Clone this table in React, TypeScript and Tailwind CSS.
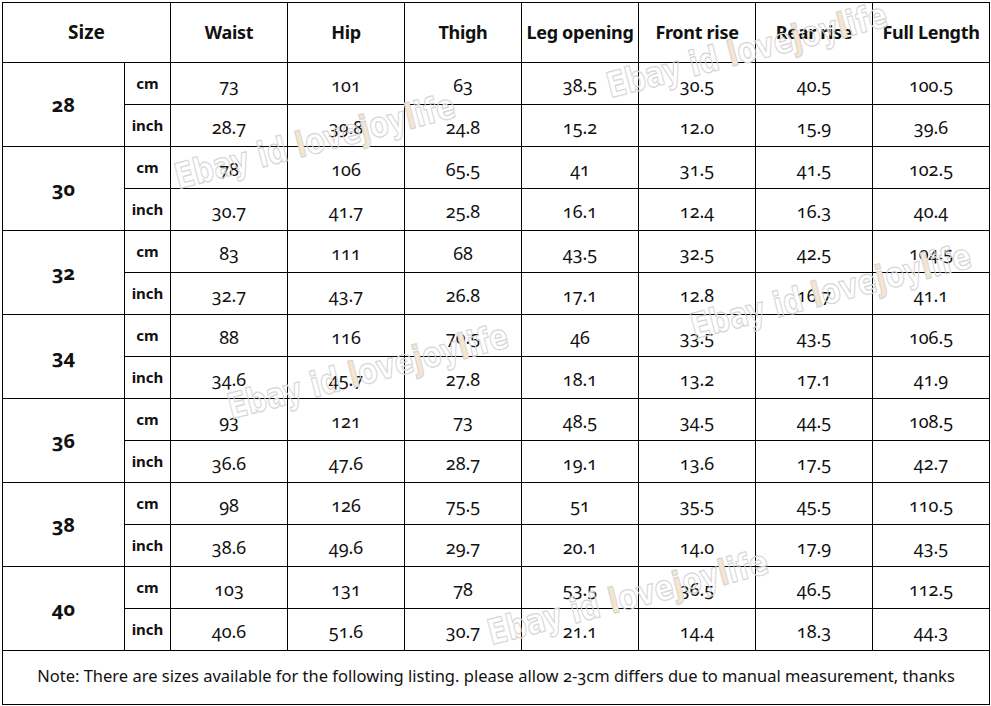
import React from 'react';

const headers = ['Waist', 'Hip', 'Thigh', 'Leg opening', 'Front rise', 'Rear rise', 'Full Length'];

const rows: { size: string; cm: string[]; inch: string[] }[] = [
  { size: '28', cm: ['73', '101', '63', '38.5', '30.5', '40.5', '100.5'], inch: ['28.7', '39.8', '24.8', '15.2', '12.0', '15.9', '39.6'] },
  { size: '30', cm: ['78', '106', '65.5', '41', '31.5', '41.5', '102.5'], inch: ['30.7', '41.7', '25.8', '16.1', '12.4', '16.3', '40.4'] },
  { size: '32', cm: ['83', '111', '68', '43.5', '32.5', '42.5', '104.5'], inch: ['32.7', '43.7', '26.8', '17.1', '12.8', '16.7', '41.1'] },
  { size: '34', cm: ['88', '116', '70.5', '46', '33.5', '43.5', '106.5'], inch: ['34.6', '45.7', '27.8', '18.1', '13.2', '17.1', '41.9'] },
  { size: '36', cm: ['93', '121', '73', '48.5', '34.5', '44.5', '108.5'], inch: ['36.6', '47.6', '28.7', '19.1', '13.6', '17.5', '42.7'] },
  { size: '38', cm: ['98', '126', '75.5', '51', '35.5', '45.5', '110.5'], inch: ['38.6', '49.6', '29.7', '20.1', '14.0', '17.9', '43.5'] },
  { size: '40', cm: ['103', '131', '78', '53.5', '36.5', '46.5', '112.5'], inch: ['40.6', '51.6', '30.7', '21.1', '14.4', '18.3', '44.3'] },
];

/** 水印文字 */
function Watermark({ className }: { className: string }) {
  const fill = 'text-[#f7e6cc]';
  return (
    <div
      className={`absolute -translate-x-1/2 -translate-y-1/2 rotate-[-14.5deg] scale-y-[1.25] whitespace-nowrap pointer-events-none font-['DejaVu_Sans',sans-serif] font-bold text-[28px] leading-none text-transparent [-webkit-text-stroke:1px_#d6d6d6] ${className}`}
    >
      Ebay id <span className={fill}>l</span>ove<span className={fill}>j</span>oy<span className={fill}>l</span>ife
    </div>
  );
}

export default function App() {
  return (
    <div className="relative w-[991px] h-[706px] bg-white pl-[2px] pt-[2px] font-['Noto_Sans','Open_Sans',sans-serif] text-[#111] oldstyle-nums">
      <div className="grid w-fit grid-cols-[121px_45px_repeat(7,116px)] grid-rows-[59px_repeat(14,41px)_53px] gap-px p-px bg-black">
        {/* 表头 */}
        <div className="col-span-2 bg-white flex items-center justify-center font-bold text-[19px]">Size</div>
        {headers.map((h) => (
          <div key={h} className="bg-white flex items-center justify-center font-bold text-[18px] tracking-[-0.3px] whitespace-nowrap">
            {h}
          </div>
        ))}

        {/* 尺码数据 */}
        {rows.map((r) => (
          <React.Fragment key={r.size}>
            <div className="row-span-2 bg-white flex items-center justify-center font-bold text-[20px]">{r.size}</div>
            <div className="bg-white flex items-center justify-center font-bold text-[15px]">cm</div>
            {r.cm.map((v, i) => (
              <div key={'c' + i} className="bg-white flex items-center justify-center text-[18px] pt-[3px]">{v}</div>
            ))}
            <div className="bg-white flex items-center justify-center font-bold text-[15px]">inch</div>
            {r.inch.map((v, i) => (
              <div key={'i' + i} className="bg-white flex items-center justify-center text-[18px] pt-[3px]">{v}</div>
            ))}
          </React.Fragment>
        ))}

        <div className="col-span-9 bg-white flex items-center justify-center text-[16.5px] pb-[2px]">
          Note: There are sizes available for the following listing. please allow 2-3cm differs due to manual measurement, thanks
        </div>
      </div>

      <Watermark className="left-[315px] top-[142px]" />
      <Watermark className="left-[747px] top-[51px]" />
      <Watermark className="left-[368px] top-[372px]" />
      <Watermark className="left-[831px] top-[292px]" />
      <Watermark className="left-[628px] top-[598px]" />
    </div>
  );
}
